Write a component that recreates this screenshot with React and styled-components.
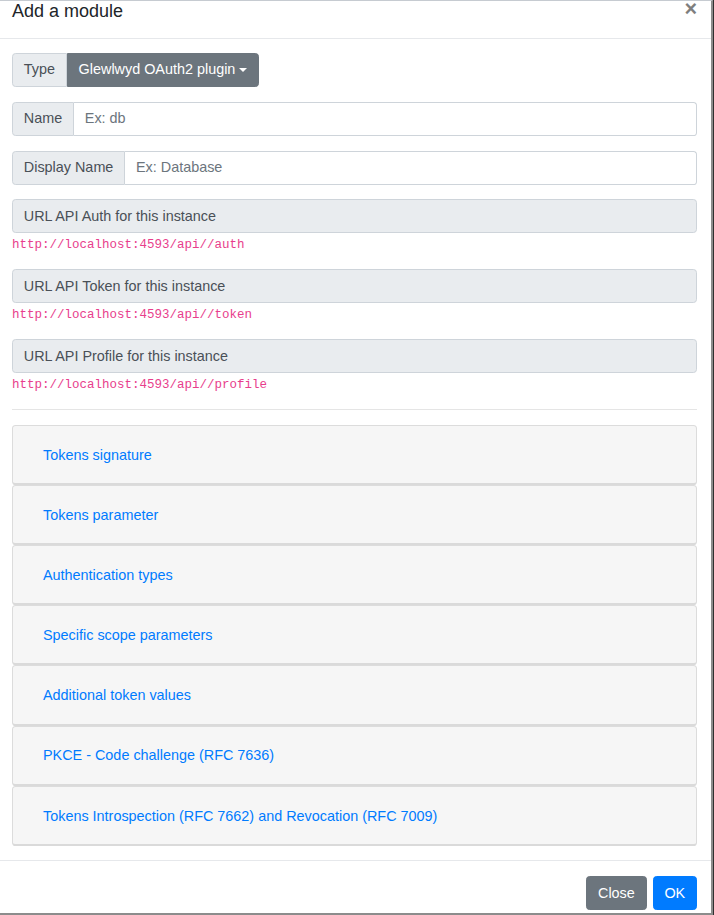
import React from 'react';
import styled, { createGlobalStyle } from 'styled-components';

const GlobalStyle = createGlobalStyle`
  html, body {
    margin: 0;
    padding: 0;
    background: #2f2f2f;
  }
  body {
    font-family: "Liberation Sans", Arial, sans-serif;
    font-size: 14.4px;
    line-height: 1.5;
    color: #212529;
  }
`;

const Modal = styled.div`
  width: 711px;
  height: 912px;
  background: #fff;
  border-top: 1px solid #c6cbd1;
  border-right: 2px solid #8c8c8c;
  border-bottom: 2px solid #8c8c8c;
  display: flex;
  flex-direction: column;
  overflow: hidden;
`;

const Header = styled.div`
  height: 37px;
  flex: none;
  display: flex;
  align-items: flex-start;
  justify-content: space-between;
  padding: 0 14px 0 12px;
  border-bottom: 1px solid #e6e8eb;
`;

const Title = styled.h5`
  margin: 0;
  font-size: 18px;
  font-weight: 400;
  line-height: 21.6px;
`;

const CloseX = styled.span`
  font-size: 21.6px;
  font-weight: 700;
  line-height: 18px;
  margin-top: -1px;
  color: #000;
  opacity: 0.5;
`;

const Body = styled.div`
  flex: 1;
  padding: 14px 14px 14.4px 12px;
`;

const Group = styled.div`
  display: flex;
  height: 34px;
  margin-bottom: 14.8px;
`;

const Addon = styled.span`
  display: flex;
  align-items: center;
  padding: 0 10.8px;
  background: #e9ecef;
  border: 1px solid #ced4da;
  border-radius: ${p => (p.$full ? '3.6px' : '3.6px 0 0 3.6px')};
  color: #495057;
  white-space: nowrap;
  flex: ${p => (p.$full ? '1' : 'none')};
  box-sizing: border-box;
`;

const Input = styled.input`
  flex: 1;
  min-width: 0;
  border: 1px solid #ced4da;
  border-left: 0;
  border-radius: 0 3.6px 3.6px 0;
  padding: 0 10.8px;
  font: inherit;
  color: #495057;
  outline: none;
  &::placeholder {
    color: #6c757d;
  }
`;

const DropButton = styled.button`
  display: flex;
  align-items: center;
  padding: 0 10.8px;
  background: #6c757d;
  border: 1px solid #6c757d;
  border-radius: 0 3.6px 3.6px 0;
  color: #fff;
  font: inherit;
  &::after {
    content: '';
    display: inline-block;
    margin-left: 3.7px;
    border-top: 4.3px solid #fff;
    border-left: 4.3px solid transparent;
    border-right: 4.3px solid transparent;
  }
`;

const UrlField = styled.div`
  margin-bottom: 14.4px;
`;

const UrlBox = styled.div`
  display: flex;
  height: 34px;
`;

const UrlLine = styled.div`
  height: 21.6px;
  line-height: 21.6px;
`;

const Code = styled.code`
  font-family: "Liberation Mono", "Courier New", monospace;
  font-size: 12.5px;
  color: #e83e8c;
`;

const Rule = styled.hr`
  margin: 0 0 14.4px;
  border: 0;
  border-top: 1px solid #e5e5e5;
`;

const Accordion = styled.div`
  display: flex;
  flex-direction: column;
`;

const Card = styled.div`
  height: 60.2px;
  box-sizing: border-box;
  background: #f6f6f6;
  border: 1px solid #dcdcdc;
  border-bottom: 2px solid #dadada;
  border-radius: 3.6px;
  display: flex;
  align-items: center;
  padding: 2px 18px 0 30px;
`;

const CardLink = styled.span`
  color: #007bff;
  font-size: 14.4px;
`;

const Footer = styled.div`
  flex: none;
  height: 52px;
  border-top: 1px solid #e6e8eb;
  display: flex;
  justify-content: flex-end;
  align-items: flex-start;
  gap: 6px;
  padding: 15px 14px 0 0;
`;

const Button = styled.button`
  height: 34px;
  padding: 0 10.8px;
  border-radius: 3.6px;
  border: 1px solid ${p => (p.$primary ? '#007bff' : '#6c757d')};
  background: ${p => (p.$primary ? '#007bff' : '#6c757d')};
  color: #fff;
  font: inherit;
`;

const urls = [
  ['URL API Auth for this instance', 'http://localhost:4593/api//auth'],
  ['URL API Token for this instance', 'http://localhost:4593/api//token'],
  ['URL API Profile for this instance', 'http://localhost:4593/api//profile'],
];

const sections = [
  'Tokens signature',
  'Tokens parameter',
  'Authentication types',
  'Specific scope parameters',
  'Additional token values',
  'PKCE - Code challenge (RFC 7636)',
  'Tokens Introspection (RFC 7662) and Revocation (RFC 7009)',
];

const App = () => (
  <>
    <GlobalStyle />
    <Modal>
      <Header>
        <Title>Add a module</Title>
        <CloseX>×</CloseX>
      </Header>
      <Body>
        <Group>
          <Addon>Type</Addon>
          <DropButton>Glewlwyd OAuth2 plugin</DropButton>
        </Group>
        <Group>
          <Addon>Name</Addon>
          <Input placeholder="Ex: db" />
        </Group>
        <Group>
          <Addon>Display Name</Addon>
          <Input placeholder="Ex: Database" />
        </Group>
        {urls.map(([label, url]) => (
          <UrlField key={label}>
            <UrlBox>
              <Addon $full>{label}</Addon>
            </UrlBox>
            <UrlLine>
              <Code>{url}</Code>
            </UrlLine>
          </UrlField>
        ))}
        <Rule />
        <Accordion>
          {sections.map(s => (
            <Card key={s}>
              <CardLink>{s}</CardLink>
            </Card>
          ))}
        </Accordion>
      </Body>
      <Footer>
        <Button>Close</Button>
        <Button $primary>OK</Button>
      </Footer>
    </Modal>
  </>
);

export default App;
